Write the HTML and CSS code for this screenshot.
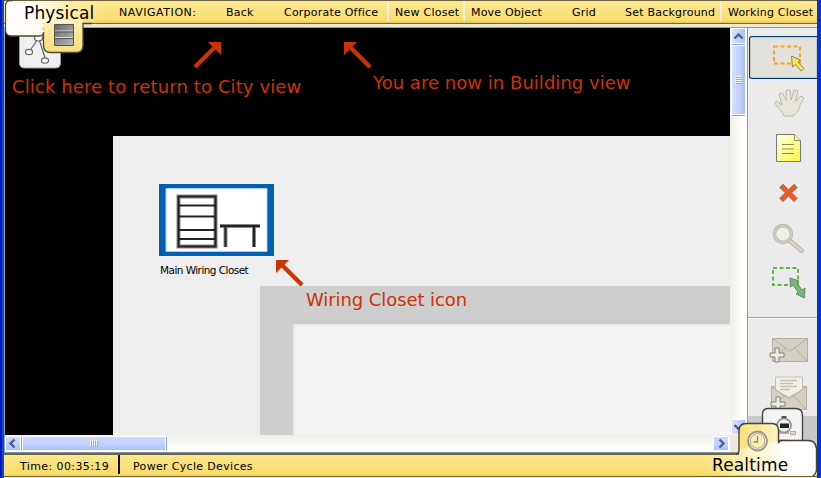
FILE: index.html
```
<!DOCTYPE html>
<html lang="en">
<head>
<meta charset="utf-8">
<title>Physical Workspace</title>
<link rel="stylesheet" href="styles.css">
</head>
<body>
<div class="window">
  <header class="topbar">
    <nav class="nav">
      <span class="label navigation">NAVIGATION:</span>
      <span class="label back">Back</span>
      <span class="label office">Corporate Office</span>
      <span class="label new divided">New Closet</span>
      <span class="label move divided">Move Object</span>
      <span class="label grid">Grid</span>
      <span class="label background">Set Background</span>
      <span class="label working divided">Working Closet</span>
    </nav>
  </header>
  <main class="workspace">
    <section class="view">
      <div class="canvas">
        <div class="building"></div>
        <div class="room"></div>
        <div class="room-floor"></div>
        <svg class="closet" width="115" height="72" viewBox="0 0 115 72">
          <path fill="#0061b0" d="M0 0h115v72H0z"/><path fill="#fff" stroke="#a8d0ec" d="M7 4.500h101v63H7z"/>
          <g fill="none" stroke="#888" stroke-width="4"><path d="M19.500 12.500h37v50h-37zM61 42h40M66.500 42v21M95 42v21"/></g>
          <g fill="none" stroke="#222" stroke-width="2"><path d="M19.500 12.500h37v50h-37zM19 21.500h37M19 32.500h37M19 46h37M19 55h37M61 42h40M66.500 42v21M95 42v21"/></g>
        </svg>
        <span class="closet-name">Main Wiring Closet</span>
        <svg class="arrows" width="725" height="407" viewBox="5 28 725 407">
          <g fill="#cc3300" stroke="none">
            <path id="nw" d="M344 42h13l-4.500 4.500L371.500 65.500l-3 3L349.500 49.500 344 55z"/>
            <path d="M221 42h-13l4.500 4.500L193.500 65.500l3 3L215.500 49.500 221 55z"/>
            <use href="#nw" x="-68" y="218"/>
          </g>
        </svg>
        <span class="note city">Click here to return to City view</span>
        <span class="note here">You are now in Building view</span>
        <span class="note icon">Wiring Closet icon</span>
      </div>
      <div class="vscroll">
        <svg width="17" height="407" viewBox="0 0 17 407">
          <defs>
            <linearGradient id="v"><stop stop-color="#d6e1ff"/><stop offset=".6" stop-color="#bdd0ff"/><stop offset="1" stop-color="#a6bdf1"/></linearGradient>
          </defs>
          <g fill="url(#v)" stroke="#fff"><rect x="1.500" y=".5" width="14" height="15" rx="1"/><rect x="1.500" y="17.500" width="14" height="69" rx="1"/><rect x="1.500" y="391.500" width="14" height="15" rx="1"/></g>
          <path d="M2 16.500h13M2 87.500h13" stroke="#86a6dc"/>
          <path d="M4.500 10.500l4-4 4 4M4.500 397l4 4 4-4" fill="none" stroke="#4d6185" stroke-width="2.400"/>
          <path d="M5 48.500h7M5 50.500h7M5 52.500h7M5 54.500h7" stroke="#f1f5ff"/><path d="M6 49.500h7M6 51.500h7M6 53.500h7M6 55.500h7" stroke="#8faae8"/>
        </svg>
      </div>
      <div class="hscroll">
        <svg width="725" height="17" viewBox="0 0 725 17">
          <defs><linearGradient id="h" x2="0" y2="1"><stop stop-color="#cddaff"/><stop offset=".6" stop-color="#bed0ff"/><stop offset="1" stop-color="#a6bdf1"/></linearGradient></defs>
          <g fill="url(#h)" stroke="#fff"><rect x=".5" y="1.500" width="15" height="14" rx="1"/><rect x="17.500" y="1.500" width="143" height="14" rx="1"/><rect x="708.500" y="1.500" width="15" height="14" rx="1"/></g>
          <path d="M16.500 2v13M161.500 2v13" stroke="#86a6dc"/>
          <path d="M9.500 4.500l-4 4 4 4M714.500 4.500l4 4-4 4" fill="none" stroke="#4d6185" stroke-width="2.400"/>
          <path d="M85.500 5v6M87.500 5v6M89.500 5v6M91.500 5v6" stroke="#f1f5ff"/><path d="M86.500 6v6M88.500 6v6M90.500 6v6M92.500 6v6" stroke="#8faae8"/>
        </svg>
      </div>
      <div class="corner"></div>
    </section>
    <aside class="tools">
      <div class="tool selected">
        <svg width="34" height="30" viewBox="772 43 34 30"><path d="M774 46.500h26v17h-26z" fill="none" stroke="#ffa21a" stroke-width="2" stroke-dasharray="4 2.500"/><path d="M791.500 56l9 4-2.500 2 6 6.500-3 2.500-5.500-6.500-3 2.500z" fill="#ffe34f" stroke="#8e8765"/></svg>
      </div>
      <div class="tool">
        <svg width="32" height="30" viewBox="773 89 32 30"><path d="M784 117c-1-5-7-8-9-13l2-1.500 5 3.500-3-11 3.500-1 4 8-.500-11h4l1 10 3-10 4 1-2.500 10.500 5.500-5.500 3 2-4 7c0 5-4 8-7 11z" fill="#e8e6da" stroke="#bcb9aa"/></svg>
      </div>
      <div class="tool">
        <svg width="28" height="30" viewBox="775 133 28 30"><defs><linearGradient id="note" x2="1" y2="1"><stop stop-color="#fffff0"/><stop offset="1" stop-color="#fff83c"/></linearGradient></defs><path d="M776.500 134.500h18l6 6v21h-24z" fill="url(#note)" stroke="#777"/><path d="M794.500 134.500v6h6" fill="#fffb94" stroke="#999660"/><path d="M782 144.500h12M782 149h12M782 153.500h12" stroke="#8c8b58"/></svg>
      </div>
      <div class="tool">
        <svg width="22" height="22" viewBox="778 183 22 22"><path d="M783 185l5.500 5.500L794 185l3.500 3.500-5.500 5.300 5.500 5.500-3.500 3.500-5.500-5.500-5.500 5.500-3.500-3.500 5.500-5.500-5.500-5.300z" fill="#ee5a1b" stroke="#979797"/></svg>
      </div>
      <div class="tool">
        <svg width="32" height="30" viewBox="773 223 32 30"><path d="M789 240l12.500 10.500" stroke="#b5b2a3" stroke-width="4.600" stroke-linecap="round"/><path d="M789 240l12.500 10.500" stroke="#d8d5c7" stroke-width="2.800" stroke-linecap="round"/><circle cx="783" cy="234" r="8.500" fill="#eeeeeb" stroke="#b5b2a3" stroke-width="3.300"/><circle cx="783" cy="234" r="8.500" fill="none" stroke="#d4d1c2" stroke-width="1.700"/></svg>
      </div>
      <div class="tool resize">
        <svg width="36" height="34" viewBox="771 267 36 34"><path d="M773 269h25v17h-25z" fill="none" stroke="#62b848" stroke-width="2" stroke-dasharray="4 2.500"/><path d="M790 279l9 3-2 2 5 7 3-2-.500 10-8.500-4 2-2-5-7-2.500 2z" fill="#78b877" stroke="#71816e"/></svg>
      </div>
      <div class="rule"></div>
      <div class="tool mail">
        <svg width="40" height="27" viewBox="768 336 40 27"><path d="M772.500 337.500h35v23h-35z" fill="#d4d1c3" stroke="#b3b0a1"/><path d="M773 338l17 12 17-12M773 360l12-13M807 360l-12-13" fill="none" stroke="#b3b0a1"/><path d="M775 347h4v5h5v4h-5v5h-4v-5h-5v-4h5z" fill="#eeece2" stroke="#858276"/></svg>
      </div>
      <div class="tool open-mail">
        <svg width="40" height="36" viewBox="768 375 40 36"><path d="M771.500 386.500h35v23h-35z" fill="#d4d1c3" stroke="#b3b0a1"/><path d="M775.500 377h27v13l-14 7-13-7z" fill="#f2f0e5" stroke="#c4c1b3"/><path d="M780 380.500h17M780 383.500h13M780 386.500h17M780 389.500h10" stroke="#c6c3b6" stroke-width="1.700"/><path d="M772 387l17 12 17-12M772 409l12-13M806 409l-12-13" fill="none" stroke="#b3b0a1"/><path d="M776 397h4v5h5v4h-5v5h-4v-5h-5v-4h5z" fill="#eeece2" stroke="#858276"/></svg>
      </div>
      <div class="tools-end"></div>
    </aside>
  </main>
  <footer class="statusbar">
    <span class="time">Time: 00:35:19</span>
    <span class="power">Power Cycle Devices</span>
  </footer>
  <div class="physical-tab">
    <svg width="110" height="70" viewBox="0 0 110 70">
      <defs>
        <linearGradient id="p"><stop stop-color="#fff"/><stop offset=".3" stop-color="#fffdf2"/><stop offset="1" stop-color="#fbe58b" stop-opacity="0"/></linearGradient>
        <linearGradient id="y" x2="0" y2="1"><stop stop-color="#fdf0b4"/><stop offset="1" stop-color="#f8df78"/></linearGradient>
        <linearGradient id="rack" x2="1" y2="1"><stop stop-color="#666"/><stop offset="1" stop-color="#bbb"/></linearGradient>
      </defs>
      <path d="M14.500 30v33q0 5 5 5h31q5 0 5-5V30z" fill="#f0f0f0" stroke="#999"/>
      <path d="M33 39l-7 10M34 39l6 19" stroke="#666" stroke-width="1.200"/><g fill="#fff" stroke="#666" stroke-width="1.200"><ellipse cx="33.500" cy="38" rx="4" ry="3"/><ellipse cx="24" cy="52" rx="3.500" ry="2.700"/><ellipse cx="40" cy="60.500" rx="3.500" ry="2.700"/></g>
      <path d="M38.500 20v25.500q0 7 7 7h26q6.500 0 6.500-7V20z" fill="url(#y)"/>
      <path d="M6 1Q.5 1 .5 6v24q0 6 6 6h28q4 0 4-4v-9H110V1z" fill="url(#p)"/>
      <path d="M8 .500H6Q.5.500.5 6v24q0 6 6 6h28q4 0 4-4v13q0 7.500 7 7.500h26q6.500 0 6.500-7V23.500H87" fill="none" stroke="#4d4933" stroke-width="1.300"/>
      <path d="M49.500 24.500h19v21h-19z" fill="url(#rack)" stroke="#555"/><path d="M50 31h18M50 37.500h18" stroke="#ddd"/><path d="M50 32h18M50 38.500h18" stroke="#555"/>
    </svg>
    <span class="tab-name">Physical</span>
  </div>
  <div class="realtime-tab">
    <svg width="117" height="72" viewBox="700 406 117 72">
      <defs>
        <linearGradient id="r" gradientUnits="userSpaceOnUse" x1="700" x2="817" y1="0" y2="0"><stop stop-color="#fae587" stop-opacity="0"/><stop offset=".35" stop-color="#fcefb3"/><stop offset=".75" stop-color="#fff"/></linearGradient>
        <linearGradient id="t"><stop stop-color="#f9df7c"/><stop offset="1" stop-color="#fdf3c4"/></linearGradient>
      </defs>
      <path d="M762.500 440v-26q0-5.500 6-5.500h27q7 0 7 7V441z" fill="#f3f3f3" stroke="#444" stroke-width="1.400"/>
      <circle cx="784" cy="425.500" r="7" fill="#eee" stroke="#888" stroke-width="1.500"/><path d="M781.500 417h5" stroke="#555" stroke-width="2"/><path d="M780 423.500h9v4.500h-9z" fill="#222"/><path d="M776 433h13" stroke="#999" stroke-width="1.500"/><path d="M790.500 431.500h5v3h-5z" fill="#f5df9c" stroke="#aaa"/>
      <path d="M739 456v-24q0-8 7-8h26q6.500 0 6.500 7v25z" fill="url(#t)"/>
      <path d="M700 455h39l1-6 39-8h29q7 0 8 8v23l-4 4H700z" fill="url(#r)"/>
      <path d="M736 454q3 0 3-4v-19q0-7.500 7-7.500h26q6.500 0 6.500 7v13q0-3 4-3h26q7 0 8 8v21q0 4-4 7" fill="none" stroke="#464332" stroke-width="1.400"/>
      <path d="M700 475.500h80" stroke="#eac84f"/><path d="M700 476.500h113" stroke="#75652f"/>
      <circle cx="757.500" cy="441" r="9.500" fill="#f8f3da" stroke="#99968a" stroke-width="1.800"/><circle cx="757.500" cy="441" r="7.300" fill="#f9edb4" stroke="#aaa793"/><path d="M757.500 436v6h-4" fill="none" stroke="#8b8878" stroke-width="1.300"/>
    </svg>
    <span class="tab-name">Realtime</span>
  </div>
</div>
</body>
</html>
```
FILE: styles.css
```
* { box-sizing: border-box; }
body { margin: 0; overflow: hidden; font-family: "DejaVu Sans", sans-serif; color: #000; }
svg { display: block; }
.window {
  position: relative;
  width: 821px;
  height: 478px;
  display: grid;
  grid-template-rows: 28px 425px 25px;
  border-left: 4px solid #0849d8;
  border-right: 4px solid #0036d0;
  background: #ece9d8;
}
.window::before { content: ""; position: absolute; left: -4px; top: 0; width: 2px; height: 478px; background: #0018b8; }
.topbar {
  background: linear-gradient(#6d603c 0 1px, #fce993 1px, #f8dc6c 21px, #e9c84e 22.5px, #796831 23px 24px, #ece9d8 24px 27px, #929da6 27px);
}
.nav { display: flex; height: 24px; padding-left: 115px; white-space: nowrap; font-size: 11px; }
.label { flex: none; position: relative; line-height: 25px; }
.navigation { width: 107px; letter-spacing: .55px; }
.back { width: 58px; letter-spacing: .2px; }
.office { width: 111px; letter-spacing: .22px; }
.new { width: 76px; letter-spacing: .25px; }
.move { width: 101px; letter-spacing: .2px; }
.grid { width: 53px; letter-spacing: .2px; }
.background { width: 103px; letter-spacing: .22px; }
.working { letter-spacing: .18px; }
.divided::before { content: ""; position: absolute; left: -8px; top: 1px; width: 2px; height: 20px; background: #f2f0e9; }
.workspace { display: grid; grid-template-columns: 744px 69px; }
.view {
  display: grid;
  grid-template: 407px 18px / 725px 18px;
  border-left: 1px solid #8a9fb0;
  min-width: 0;
}
.canvas { position: relative; overflow: hidden; background: #000; }
.building { position: absolute; left: 108px; top: 108px; width: 617px; height: 299px; background: #eee; }
.room { position: absolute; left: 255px; top: 258px; width: 470px; height: 149px; background: #cecece; }
.room-floor { position: absolute; left: 288px; top: 296px; width: 437px; height: 111px; background: #f4f4f4; border: solid #e9e9e9; border-width: 2px 0 0 2px; }
.closet { position: absolute; left: 154px; top: 156px; }
.closet-name { position: absolute; left: 155px; top: 235px; font: 10.5px/14px "DejaVu Sans", sans-serif; letter-spacing: -.55px; white-space: nowrap; }
.arrows { position: absolute; left: 0; top: 0; }
.note { position: absolute; color: #cc3300; font-size: 18px; line-height: 22px; white-space: nowrap; }
.city { left: 7px; top: 48px; letter-spacing: .11px; }
.here { left: 368px; top: 44px; letter-spacing: .03px; }
.icon { left: 301px; top: 261px; letter-spacing: -.08px; }
.vscroll { background: linear-gradient(90deg, #f0eee7, #fffffb 75%, #fff 17px, #8299b0 17px); }
.hscroll { background: linear-gradient(#f0eee7, #fffffb 75%, #fff 17px, #8299b0 17px); }
.corner { background: #ece9d8; border-right: 1px solid #8299b0; border-bottom: 1px solid #8299b0; }
.tools { display: flex; flex-direction: column; background: #ebebeb; }
.tool { height: 45px; flex: none; display: flex; justify-content: center; align-items: center; padding-left: 13px; }
.selected { margin: 8px 0 1px 1px; height: 43px; background: #e2e1db; border: solid #003c74; border-width: 1px 0 1px 1px; border-radius: 3px 0 0 3px; box-shadow: inset 0 0 0 1px #cccac3; padding-left: 10px; }
.resize { height: 56px; align-items: flex-start; padding-top: 6px; }
.rule { flex: none; height: 2px; margin-top: 1px; background: linear-gradient(#a8a695 1px, #fff 1px); }
.mail { height: 56px; padding-top: 6px; padding-left: 11px; }
.open-mail { height: 36px; padding-left: 11px; }
.tools-end { flex: 1; margin-top: 5px; background: #c9c9c9; }
.statusbar {
  display: flex;
  height: 25px;
  font-size: 11px;
  white-space: nowrap;
  background: linear-gradient(#6c623e 0 1px, #766842 2px, #fbe88e 2px, #f7db69 22px, #eac84f 23px, #75652f 23px 24px, #ece9d8 24px);
}
.time { width: 116px; padding-left: 16px; letter-spacing: .4px; border-right: 2px solid #111; height: 19px; margin-top: 2px; line-height: 23px; }
.power { padding-left: 13px; letter-spacing: .33px; line-height: 27px; }
.physical-tab { position: absolute; left: 1px; top: 0; }
.realtime-tab { position: absolute; left: 696px; top: 406px; }
.tab-name { position: absolute; font-size: 17px; line-height: 22px; white-space: nowrap; letter-spacing: .15px; }
.physical-tab .tab-name { left: 19px; top: 2px; }
.realtime-tab .tab-name { left: 12px; top: 48px; }
```
